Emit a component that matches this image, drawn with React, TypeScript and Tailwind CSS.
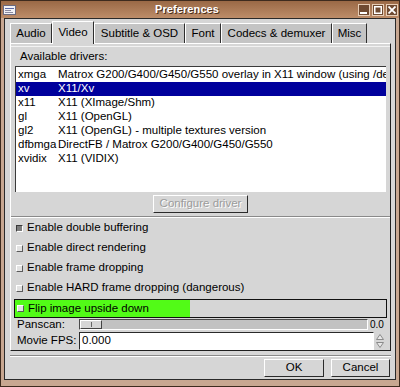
import React from "react";

const drivers = [
  ["xmga", "Matrox G200/G400/G450/G550 overlay in X11 window (using /dev/mga_vid)"],
  ["xv", "X11/Xv"],
  ["x11", "X11 (XImage/Shm)"],
  ["gl", "X11 (OpenGL)"],
  ["gl2", "X11 (OpenGL) - multiple textures version"],
  ["dfbmga", "DirectFB / Matrox G200/G400/G450/G550"],
  ["xvidix", "X11 (VIDIX)"],
];

const tabs = [
  { label: "Audio", w: "w-[42px]" },
  { label: "Video", w: "w-[42px]", active: true },
  { label: "Subtitle & OSD", w: "w-[91px]" },
  { label: "Font", w: "w-[36px]" },
  { label: "Codecs & demuxer", w: "w-[111px]" },
  { label: "Misc", w: "w-[35px]" },
];

const options = [
  { label: "Enable double buffering", checked: true },
  { label: "Enable direct rendering" },
  { label: "Enable frame dropping" },
  { label: "Enable HARD frame dropping (dangerous)" },
];

function Check({ checked }: { checked?: boolean }) {
  return (
    <span
      className={`block w-[7px] h-[7px] border shrink-0 ${
        checked
          ? "bg-[#7c7c7c] border-t-[#3a3a3a] border-l-[#3a3a3a] border-b-white border-r-white"
          : "bg-[#e2e2e2] border-t-white border-l-white border-b-[#5a5a5a] border-r-[#5a5a5a]"
      }`}
    />
  );
}

function TitleButton({ children }: { children: React.ReactNode }) {
  return (
    <div className="w-[12px] h-[12px] border border-[#e6cdb6] bg-[#6f4a31] flex items-center justify-center">
      {children}
    </div>
  );
}

export default function App() {
  return (
    <div className="w-[400px] h-[387px] flex flex-col bg-[#c8a791] border border-[#3e2b1e] font-['Liberation_Sans',Arial,sans-serif] text-[11.5px] text-black overflow-hidden">
      {/* title bar */}
      <div className="h-[17px] shrink-0 flex items-center bg-gradient-to-b from-[#9a6946] to-[#bd8d69] pl-[2px] pr-[1px]">
        <svg width="13" height="10" viewBox="0 0 13 10" className="shrink-0">
          <rect x="0.5" y="0.5" width="12" height="9" fill="#f2f2f6" stroke="#6a6a80" />
          <rect x="2" y="3" width="9" height="1" fill="#5a6aa8" />
          <rect x="2" y="5" width="6" height="1" fill="#8a8aa0" />
          <rect x="2" y="7" width="8" height="1" fill="#8a8aa0" />
        </svg>
        <div className="flex-1 text-center text-white font-bold text-[11px] tracking-[0.1px] [text-shadow:1px_1px_0_#4a2c1a]">
          Preferences
        </div>
        <div className="flex gap-[2px]">
          <TitleButton>
            <svg width="8" height="8" viewBox="0 0 8 8">
              <rect x="0" y="6" width="7" height="2" fill="#fff" />
            </svg>
          </TitleButton>
          <TitleButton>
            <svg width="8" height="8" viewBox="0 0 8 8">
              <rect x="0.75" y="0.75" width="6.5" height="6.5" fill="none" stroke="#fff" strokeWidth="1.5" />
            </svg>
          </TitleButton>
          <TitleButton>
            <svg width="8" height="8" viewBox="0 0 8 8">
              <path d="M0.5 0.5L7.5 7.5M7.5 0.5L0.5 7.5" stroke="#fff" strokeWidth="1.8" />
            </svg>
          </TitleButton>
        </div>
      </div>

      {/* window body */}
      <div className="flex-1 px-[3px] pb-[6px]">
        <div className="h-full border border-[#2a2a2a] bg-[#d6d6d6] flex flex-col pt-[2px] pl-[5px] pr-[4px]">
          {/* tabs */}
          <div className="flex items-end h-[22px] relative z-10">
            {tabs.map((t) => (
              <div
                key={t.label}
                className={`${t.w} flex items-center justify-center border-t border-l border-t-white border-l-white border-r border-r-[#2e2e2e] ${
                  t.active ? "h-[23px] -mb-[1px] bg-[#d6d6d6]" : "h-[20px] bg-[#c4c4c4]"
                }`}
              >
                {t.label}
              </div>
            ))}
          </div>

          {/* notebook page */}
          <div className="h-[308px] flex flex-col border-t border-l border-white border-r border-b border-r-[#1e1e1e] border-b-[#1e1e1e]">
            <div className="mt-[2px] border-t border-[#f2f2f2] px-[4px]">
              <div className="h-[19px] leading-[19px] pl-[5px]">Available drivers:</div>
              <div className="h-[126px] bg-white border-t border-l border-t-[#3a3a3a] border-l-[#3a3a3a] pt-[1px] overflow-hidden">
                {drivers.map(([name, desc], i) => (
                  <div
                    key={name}
                    className={`flex h-[14px] items-center whitespace-nowrap ${
                      i === 1 ? "bg-[#00009c] text-white" : ""
                    }`}
                  >
                    <span className="w-[42px] pl-[2px] shrink-0">{name}</span>
                    <span>{desc}</span>
                  </div>
                ))}
              </div>
              <div className="flex justify-center mt-[3px]">
                <div className="w-[95px] h-[18px] flex items-center justify-center border border-t-white border-l-white border-r-[#2a2a2a] border-b-[#2a2a2a] text-[#9c9c9c] [text-shadow:1px_1px_0_#ffffff]">
                  Configure driver
                </div>
              </div>
            </div>
            <div className="mt-[3px] border-t border-t-[#8a8a8a] border-b border-b-white" />

            {/* options */}
            {options.map((o) => (
              <div key={o.label} className="h-[20px] flex items-center pl-[5px] gap-[4px]">
                <Check checked={o.checked} />
                <span>{o.label}</span>
              </div>
            ))}

            <div className="mt-[1px] mx-[3px] h-[19px] border border-[#111] flex">
              <div className="w-[175px] bg-[#52fb17] flex items-center pl-[2px] gap-[4px]">
                <Check />
                <span>Flip image upside down</span>
              </div>
            </div>

            <div className="h-[13px] flex items-center pl-[6px]">
              <span className="w-[62px] shrink-0">Panscan:</span>
              <div className="w-[289px] h-[11px] bg-[#c2c2c2] border-t border-l border-[#4a4a4a] border-b border-r border-b-white border-r-white flex">
                <div className="w-[22px] h-full bg-[#d6d6d6] border border-t-white border-l-white border-r-[#444] border-b-[#444] flex items-center justify-center">
                  <span className="block w-[1px] h-[5px] bg-[#666]" />
                </div>
              </div>
              <span className="ml-[2px] text-[10px] leading-none">0.0</span>
            </div>

            <div className="mt-[1px] h-[18px] flex items-center pl-[6px]">
              <span className="w-[62px] shrink-0">Movie FPS:</span>
              <div className="w-[295px] h-full bg-white border-t border-l border-[#2a2a2a] border-b border-r border-b-white border-r-white flex items-center pl-[2px]">
                0.000
              </div>
              <div className="w-[12px] h-full flex flex-col items-center justify-center gap-[2px]">
                <svg width="8" height="6" viewBox="0 0 8 6">
                  <path d="M0.5 5.5L4 0.5L7.5 5.5Z" fill="#e8e8e8" stroke="#8a8a8a" />
                </svg>
                <svg width="8" height="6" viewBox="0 0 8 6">
                  <path d="M0.5 0.5L4 5.5L7.5 0.5Z" fill="#e8e8e8" stroke="#8a8a8a" />
                </svg>
              </div>
            </div>
          </div>

          {/* bottom buttons */}
          <div className="mt-[4px] border-t border-t-[#8a8a8a] border-b border-b-white" />
          <div className="mt-[2px] flex justify-end gap-[7px] pr-[1px]">
            <div className="w-[60px] h-[18px] flex items-center justify-center border border-t-white border-l-white border-r-[#2a2a2a] border-b-[#2a2a2a]">
              OK
            </div>
            <div className="w-[59px] h-[18px] flex items-center justify-center border border-t-white border-l-white border-r-[#2a2a2a] border-b-[#2a2a2a]">
              Cancel
            </div>
          </div>
        </div>
      </div>
    </div>
  );
}
